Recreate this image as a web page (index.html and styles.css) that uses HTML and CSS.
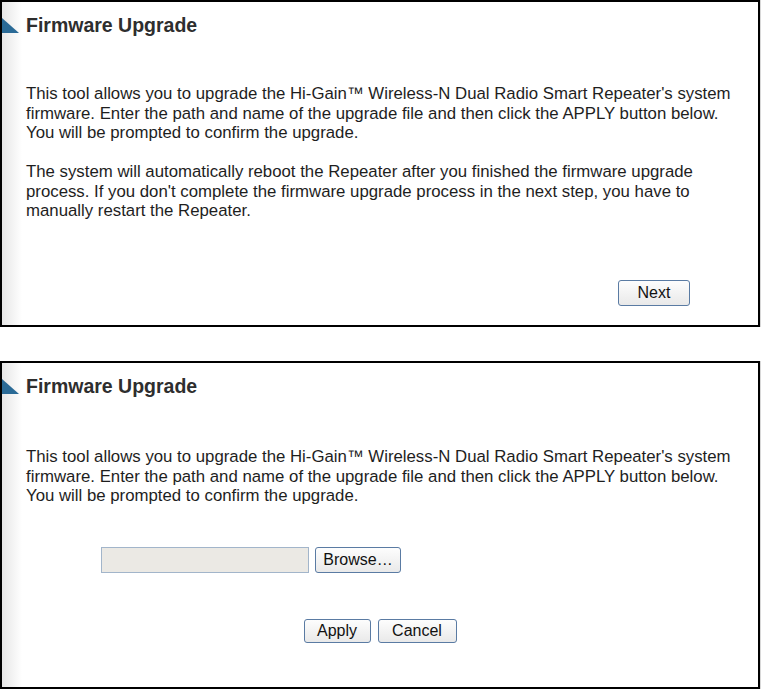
FILE: index.html
```html
<!DOCTYPE html>
<html lang="en">
<head>
    <meta charset="UTF-8">
    <title>Firmware Upgrade</title>
    <link rel="stylesheet" href="styles.css">
</head>
<body>
    <div class="panel panel-info">
        <h2 class="title">Firmware Upgrade</h2>
        <p>This tool allows you to upgrade the Hi-Gain&trade; Wireless-N Dual Radio Smart Repeater's system firmware. Enter the path and name of the upgrade file and then click the APPLY button below. You will be prompted to confirm the upgrade.</p>
        <p>The system will automatically reboot the Repeater after you finished the firmware upgrade process. If you don't complete the firmware upgrade process in the next step, you have to manually restart the Repeater.</p>
        <div class="next-row">
            <button class="btn btn-next">Next</button>
        </div>
    </div>

    <div class="panel panel-upload">
        <h2 class="title">Firmware Upgrade</h2>
        <p>This tool allows you to upgrade the Hi-Gain&trade; Wireless-N Dual Radio Smart Repeater's system firmware. Enter the path and name of the upgrade file and then click the APPLY button below. You will be prompted to confirm the upgrade.</p>
        <div class="file-row">
            <input type="text" class="file-path">
            <button class="btn btn-browse">Browse&hellip;</button>
        </div>
        <div class="action-row">
            <button class="btn btn-apply">Apply</button>
            <button class="btn btn-cancel">Cancel</button>
        </div>
    </div>
</body>
</html>
```

FILE: styles.css
```css
body {
    margin: 0;
    padding: 0;
    background: #ffffff;
    font-family: "Liberation Sans", Arial, sans-serif;
    color: #1e1e1e;
}

.panel {
    position: relative;
    box-sizing: border-box;
    width: 760px;
    border: 2px solid #000000;
    padding: 11px 23px 0 24px;
    background: linear-gradient(to right, #e6e6e6 0, #ffffff 20px);
    box-shadow: 2px 0 0 #d8d8d8;
}

.panel-info {
    height: 327px;
}

.panel-upload {
    height: 328px;
    margin-top: 34px;
}

/* blue corner marker next to the heading */
.panel::before {
    content: "";
    position: absolute;
    left: 0;
    top: 16px;
    width: 0;
    height: 0;
    border-bottom: 15px solid #2a6a96;
    border-right: 17px solid transparent;
}

.title {
    margin: 0;
    font-size: 19.5px;
    line-height: 24px;
    font-weight: bold;
    color: #2e2e2e;
}

p {
    margin: 47px 0 0 0;
    font-size: 16.8px;
    line-height: 19.5px;
}

.panel-upload p {
    margin-top: 49px;
}

p + p {
    margin-top: 19.5px;
}

.btn {
    box-sizing: border-box;
    height: 26px;
    padding: 0;
    font-family: "Liberation Sans", Arial, sans-serif;
    font-size: 16px;
    color: #111111;
    background: linear-gradient(#fdfdfd, #e9e9e9);
    border: 1px solid #5a7ba3;
    border-radius: 3px;
}

.next-row {
    display: flex;
    justify-content: flex-end;
    padding-right: 45px;
    margin-top: 59px;
}

.btn-next {
    width: 72px;
}

.file-row {
    display: flex;
    gap: 6px;
    margin-top: 41px;
    padding-left: 75px;
}

.file-path {
    box-sizing: border-box;
    width: 208px;
    height: 26px;
    margin: 0;
    background: #ebe9e4;
    border: 1px solid #a2b5ca;
}

.btn-browse {
    width: 86px;
}

.action-row {
    display: flex;
    justify-content: center;
    gap: 7px;
    margin-top: 46px;
    margin-left: -24px;
    margin-right: -23px;
}

.btn-apply {
    width: 67px;
    height: 24px;
}

.btn-cancel {
    width: 79px;
    height: 24px;
}
```
